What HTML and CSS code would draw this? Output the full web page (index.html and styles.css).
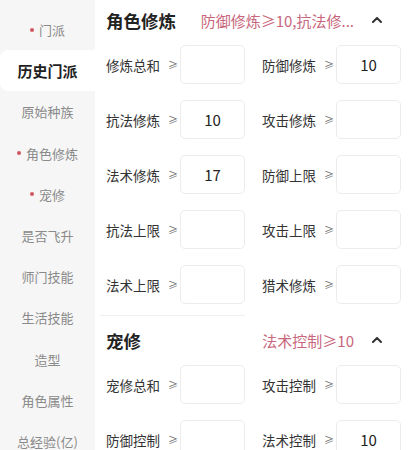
FILE: index.html
```html
<!DOCTYPE html>
<html lang="zh">
<head>
<meta charset="utf-8">
<link rel="stylesheet" href="styles.css">
</head>
<body>
<div class="page">
  <nav class="side">
    <div class="side-item"><span class="dot"></span>门派</div>
    <div class="side-item active">历史门派</div>
    <div class="side-item">原始种族</div>
    <div class="side-item"><span class="dot"></span>角色修炼</div>
    <div class="side-item"><span class="dot"></span>宠修</div>
    <div class="side-item">是否飞升</div>
    <div class="side-item">师门技能</div>
    <div class="side-item">生活技能</div>
    <div class="side-item">造型</div>
    <div class="side-item">角色属性</div>
    <div class="side-item">总经验(亿)</div>
  </nav>
  <main class="content">
    <section class="sec first">
      <div class="sec-head">
        <span class="sec-title">角色修炼</span>
        <span class="sec-sum">防御修炼≥10,抗法修...</span>
        <svg class="caret" width="10" height="6" viewBox="0 0 10 6"><path d="M1 5 L5 1 L9 5" fill="none" stroke="#333" stroke-width="2" stroke-linecap="round" stroke-linejoin="round"/></svg>
      </div>
      <div class="grid">
        <div class="field"><span class="lbl">修炼总和</span><span class="ge">≥</span><span class="box"></span></div>
        <div class="field"><span class="lbl">防御修炼</span><span class="ge">≥</span><span class="box">10</span></div>
        <div class="field"><span class="lbl">抗法修炼</span><span class="ge">≥</span><span class="box">10</span></div>
        <div class="field"><span class="lbl">攻击修炼</span><span class="ge">≥</span><span class="box"></span></div>
        <div class="field"><span class="lbl">法术修炼</span><span class="ge">≥</span><span class="box">17</span></div>
        <div class="field"><span class="lbl">防御上限</span><span class="ge">≥</span><span class="box"></span></div>
        <div class="field"><span class="lbl">抗法上限</span><span class="ge">≥</span><span class="box"></span></div>
        <div class="field"><span class="lbl">攻击上限</span><span class="ge">≥</span><span class="box"></span></div>
        <div class="field"><span class="lbl">法术上限</span><span class="ge">≥</span><span class="box"></span></div>
        <div class="field"><span class="lbl">猎术修炼</span><span class="ge">≥</span><span class="box"></span></div>
      </div>
      <div class="divider"></div>
    </section>
    <section class="sec">
      <div class="sec-head">
        <span class="sec-title">宠修</span>
        <span class="sec-sum">法术控制≥10</span>
        <svg class="caret" width="10" height="6" viewBox="0 0 10 6"><path d="M1 5 L5 1 L9 5" fill="none" stroke="#333" stroke-width="2" stroke-linecap="round" stroke-linejoin="round"/></svg>
      </div>
      <div class="grid">
        <div class="field"><span class="lbl">宠修总和</span><span class="ge">≥</span><span class="box"></span></div>
        <div class="field"><span class="lbl">攻击控制</span><span class="ge">≥</span><span class="box"></span></div>
        <div class="field"><span class="lbl">防御控制</span><span class="ge">≥</span><span class="box"></span></div>
        <div class="field"><span class="lbl">法术控制</span><span class="ge">≥</span><span class="box">10</span></div>
      </div>
    </section>
  </main>
</div>
</body>
</html>
```

FILE: styles.css
```css
* { box-sizing: border-box; }
html, body { margin: 0; padding: 0; background: #fff; }
body {
  font-family: "Noto Sans CJK SC", "Noto Sans", sans-serif;
  width: 409px;
  height: 450px;
  overflow: hidden;
}
.page {
  display: flex;
  height: 450px;
}
.side {
  width: 95px;
  flex: none;
  background: #f6f6f6;
  padding-top: 9px;
  display: flex;
  flex-direction: column;
}
.side-item {
  height: 41.2px;
  flex: none;
  display: flex;
  align-items: center;
  justify-content: center;
  font-size: 13px;
  color: #8a8a8a;
  white-space: nowrap;
}
.side-item.active {
  background: #fff;
  color: #1f1f1f;
  font-weight: 700;
  font-size: 15px;
  border-radius: 8px 0 0 8px;
}
.dot {
  width: 4px;
  height: 4px;
  border-radius: 50%;
  background: #d0555e;
  margin-right: 5px;
}
.content {
  flex: 1;
  padding-left: 11px;
}
.sec { padding-top: 4px; }
.sec.first { padding-top: 0; }
.sec-head {
  height: 40px;
  display: flex;
  align-items: center;
  margin-bottom: 5px;
}
.sec-title {
  font-size: 17.5px;
  font-weight: 700;
  color: #222;
}
.sec-sum {
  margin-left: auto;
  font-size: 15px;
  color: #c8677c;
}
.caret {
  margin-left: 18px;
  margin-right: 27px;
}
.grid {
  display: grid;
  grid-template-columns: 139px 139px;
  column-gap: 17px;
  row-gap: 16px;
}
.field {
  display: flex;
  align-items: center;
  height: 39px;
}
.lbl {
  width: 62px;
  font-size: 13.5px;
  color: #333;
  white-space: nowrap;
}
.ge {
  width: 12px;
  font-size: 10px;
  color: #666;
}
.box {
  width: 65px;
  height: 39px;
  border: 1px solid #ececec;
  border-radius: 5px;
  display: flex;
  align-items: center;
  justify-content: center;
  font-size: 15px;
  color: #222;
}
.divider {
  margin-top: 11px;
  width: 145px;
  margin-left: -6px;
  border-top: 1px solid #efefef;
}
```
